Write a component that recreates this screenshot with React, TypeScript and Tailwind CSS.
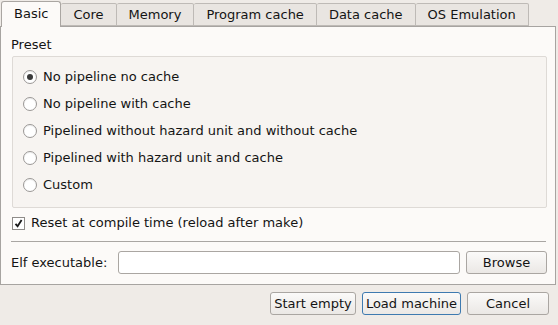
import React from "react"

const tabs = ["Basic", "Core", "Memory", "Program cache", "Data cache", "OS Emulation"]
const presets = [
  "No pipeline no cache",
  "No pipeline with cache",
  "Pipelined without hazard unit and without cache",
  "Pipelined with hazard unit and cache",
  "Custom",
]

function Radio({ checked }: { checked?: boolean }) {
  return (
    <span className="w-[14px] h-[14px] rounded-full border border-[#9a9795] bg-white flex items-center justify-center shadow-[inset_0_1px_1px_rgba(0,0,0,0.08)]">
      {checked && <span className="w-[6px] h-[6px] rounded-full bg-[#3a3a3a]" />}
    </span>
  )
}

function Button({ label, w, focus }: { label: string; w: string; focus?: boolean }) {
  return (
    <button
      className={
        "h-[23px] rounded-[3px] border bg-gradient-to-b from-[#fbfaf9] to-[#ebe8e5] flex items-center justify-center " +
        w +
        (focus ? " border-[#3e7ab0]" : " border-[#aaa6a2]")
      }
    >
      {label}
    </button>
  )
}

export default function App() {
  return (
    <div
      className="w-[558px] h-[325px] bg-[#efebe7] text-[13px] text-[#141414] overflow-hidden"
      style={{ fontFamily: '"DejaVu Sans", sans-serif' }}
    >
      {/* Tabs */}
      <div className="flex items-end h-[26px] pl-[1px] relative z-10">
        {tabs.map((t, i) =>
          i === 0 ? (
            <div
              key={t}
              className="h-[26px] px-[12px] border border-b-0 border-[#aaa6a2] rounded-t-[3px] bg-[#fcfaf8] flex items-center mb-[-1px] pb-[1px]"
            >
              {t}
            </div>
          ) : (
            <div
              key={t}
              className="h-[23px] px-[12px] border border-l-0 border-[#bebab6] rounded-t-[2px] bg-[#e9e5e1] flex items-center"
            >
              {t}
            </div>
          )
        )}
      </div>

      {/* Pane */}
      <div className="w-[556px] h-[259px] border border-[#a7a4a1] bg-[#fcfaf8] pt-[10px] pl-[10px] pr-[8px]">
        <div className="leading-[16px] mb-[3px]">Preset</div>
        <div className="ml-[1px] h-[152px] border border-[#dedad6] rounded-[2px] bg-[#f7f4f1] pt-[12px] pl-[10px] flex flex-col gap-[11px]">
          {presets.map((p, i) => (
            <div key={p} className="flex items-center gap-[6px] h-[16px]">
              <Radio checked={i === 0} />
              <span>{p}</span>
            </div>
          ))}
        </div>

        <div className="flex items-center gap-[6px] mt-[7px] ml-[1px] h-[16px]">
          <span className="w-[13px] h-[13px] border border-[#8f8c89] bg-white flex items-center justify-center">
            <svg width="9" height="9" viewBox="0 0 9 9">
              <path d="M1.5 4.8 L3.6 7.3 L7.6 1" fill="none" stroke="#1a1a1a" strokeWidth="1.8" />
            </svg>
          </span>
          <span>Reset at compile time (reload after make)</span>
        </div>

        <div className="mt-[10px] h-[1px] bg-[#a9a6a3] mr-[1px]" />

        <div className="flex items-center mt-[9px]">
          <span className="w-[107px]">Elf executable:</span>
          <input className="flex-1 h-[23px] border border-[#aaa6a2] rounded-[3px] bg-white outline-none" />
          <div className="ml-[6px]">
            <Button label="Browse" w="w-[81px]" />
          </div>
        </div>
      </div>

      {/* Bottom buttons */}
      <div className="flex justify-end gap-[6px] pr-[9px] mt-[7px]">
        <Button label="Start empty" w="w-[86px]" />
        <Button label="Load machine" w="w-[99px]" focus />
        <Button label="Cancel" w="w-[82px]" />
      </div>
    </div>
  )
}
